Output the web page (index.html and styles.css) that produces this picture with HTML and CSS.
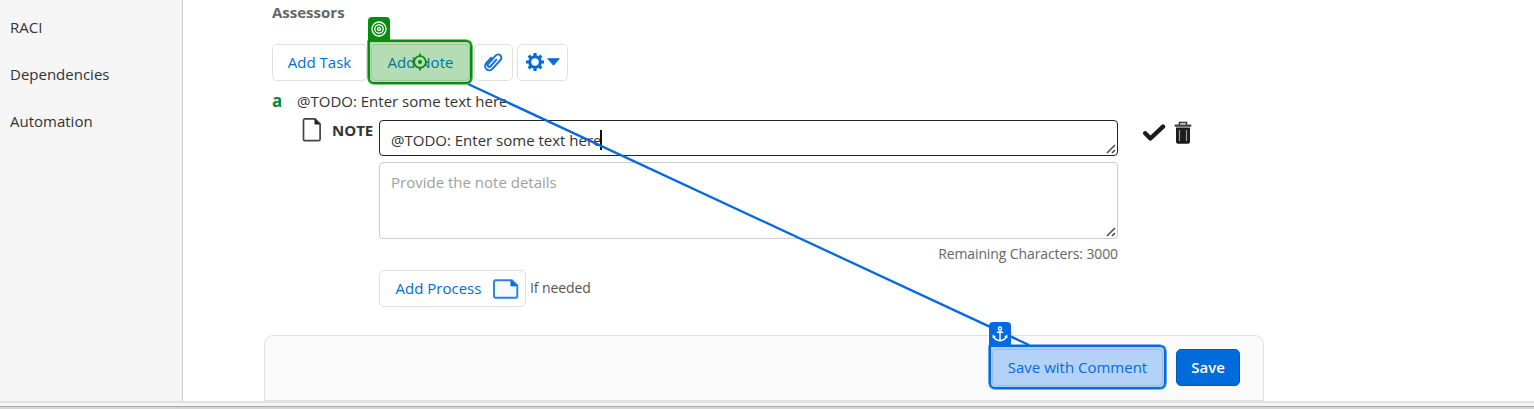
FILE: index.html
```html
<!DOCTYPE html>
<html lang="en">
<head>
<meta charset="utf-8">
<title>Process editor</title>
<link rel="stylesheet" href="styles.css">
</head>
<body>
<div class="app">
  <nav class="sidebar">
    <a class="nav-item raci">RACI</a>
    <a class="nav-item deps">Dependencies</a>
    <a class="nav-item auto">Automation</a>
  </nav>
  <main class="main">
    <h2 class="heading">Assessors</h2>
    <div class="toolbar">
      <button class="btn add-task">Add Task</button>
      <button class="btn add-note">Add Note</button>
      <button class="btn clip" aria-label="Attach">
        <svg width="20" height="20" viewBox="-10 -10 20 20" fill="none" stroke="#1473dc" stroke-width="2" stroke-linecap="round"><path transform="rotate(42)" d="M-4.200-2V5.500a4.200 4.200 0 0 0 8.400 0V-6.500a3.300 3.300 0 0 0-6.600 0V4.800a1.700 1.700 0 0 0 3.400 0V-4"/></svg>
      </button>
      <button class="btn gear" aria-label="Settings">
        <svg width="20" height="20" viewBox="-10 -10 20 20"><circle r="5.300" fill="none" stroke="#006cdb" stroke-width="3.100"/><g stroke="#006cdb" stroke-width="3.200"><path d="M0-9V-6M0 9V6M-9 0H-6M9 0H6M-6.300-6.300-4.400-4.400M6.300-6.300 4.400-4.400M-6.300 6.300-4.400 4.400M6.300 6.300 4.400 4.400"/></g></svg>
        <svg width="13" height="8" viewBox="0 0 13 8"><path d="M.8.800h11.400L6.500 7.200z" fill="#006cdb" stroke="#006cdb" stroke-linejoin="round"/></svg>
      </button>
    </div>
    <div class="step"><b class="step-key">a</b><span class="step-text">@TODO: Enter some text here</span></div>
    <div class="note">
      <div class="note-label">
        <svg width="20" height="24" viewBox="0 0 20 24"><path d="M3 .9h10l5.100 5.100v15.200a1.500 1.500 0 0 1-1.500 1.500H3a1.500 1.500 0 0 1-1.500-1.500V2.400A1.500 1.500 0 0 1 3 .9z" fill="#fff" stroke="#444" stroke-width="1.700"/><path d="M12.500.5v6h6z" fill="#222"/></svg>
        <b class="note-word">NOTE</b>
      </div>
      <div class="fields">
        <div class="field title-field"><span class="value">@TODO: Enter some text here</span><i class="caret"></i><svg class="grip" width="10" height="10" viewBox="0 0 10 10"><path d="M1 9 9 1M6 9l3-3" stroke="#444" stroke-width="1.500"/></svg></div>
        <div class="field detail-field"><span class="placeholder">Provide the note details</span><svg class="grip" width="10" height="10" viewBox="0 0 10 10"><path d="M1 9 9 1M6 9l3-3" stroke="#444" stroke-width="1.500"/></svg></div>
        <div class="remaining"><span>Remaining Characters: 3000</span></div>
        <div class="process-row">
          <button class="btn add-process"><span class="process-word">Add Process</span>
            <svg width="26" height="20" viewBox="0 0 26 20"><path d="M2.500 1.200h16.300l5.500 5.300v10.800a1.500 1.500 0 0 1-1.500 1.500H2.500A1.500 1.500 0 0 1 1 17.300V2.700a1.500 1.500 0 0 1 1.500-1.500z" fill="#f5f9fe" stroke="#2b80df" stroke-width="1.900"/><path d="M17.500 1v6.300h7z" fill="#006cdb"/></svg>
          </button>
          <span class="hint">If needed</span>
        </div>
      </div>
      <div class="actions">
        <svg width="24" height="20" viewBox="0 0 24 20"><path d="m3.200 10.300 5.200 5.200L21 3.700" fill="none" stroke="#1b1b1d" stroke-width="4.400" stroke-linecap="round" stroke-linejoin="round"/></svg>
        <svg width="18" height="24" viewBox="0 0 18 24"><path d="M5.500 4V1.500h7V4" fill="none" stroke="#333" stroke-width="1.500"/><path d="M.7 3.500h16.600v2.300H.7z" fill="#444"/><path d="M2 6.600h14v14.200a2 2 0 0 1-2 2H4a2 2 0 0 1-2-2z" fill="#1c1c1c"/><path d="M5.500 9v11M12.500 9v11" stroke="#999" stroke-width="1.200"/></svg>
      </div>
    </div>
    <footer class="save-bar">
      <button class="btn save-comment">Save with Comment</button>
      <button class="btn save">Save</button>
    </footer>
  </main>
</div>
<div class="bottom-strip"></div>
<svg class="connector" width="1534" height="409"><path d="M468 84 1029 345" stroke="#0569e3" stroke-width="2.300"/></svg>
<div class="highlight target">
  <span class="tag"><svg width="16" height="16" viewBox="-8 -8 16 16" fill="none" stroke="#fff" stroke-width="1.300"><circle r="7"/><circle r="4.200"/><circle r="1.500"/></svg></span>
  <svg class="crosshair" width="18" height="18" viewBox="-9 -9 18 18" fill="none" stroke="#078a0d" stroke-width="1.700"><circle r="5.900" fill="#b4dcb5"/><path d="M0-8.500V-5M0 8.500V5M-8.500 0H-5M8.500 0H5"/><circle r="2" fill="#078a0d" stroke="none"/></svg>
</div>
<div class="highlight anchor">
  <span class="tag"><svg width="16" height="16" viewBox="0 0 16 16" fill="none" stroke="#fff" stroke-width="1.400"><circle cx="8" cy="2.500" r="1.600"/><path d="M8 4v10.700M4.800 6.200h6.400M1.800 10.500C2.500 13 5 14.500 8 14.700c3-.2 5.500-1.700 6.200-4.200M1.300 12V9.800l2 1M14.700 12V9.800l-2 1"/></svg></span>
</div>
</body>
</html>
```

FILE: styles.css
```css
* { box-sizing: border-box; }
body {
  margin: 0;
  width: 1534px;
  height: 409px;
  overflow: hidden;
  position: relative;
  background: #fff;
  color: #333;
  font: 15px/20px "Open Sans", sans-serif;
}
.app { display: flex; height: 401px; }
.sidebar {
  width: 183px;
  padding: 17px 0 0 10px;
  display: flex;
  flex-direction: column;
  gap: 27px;
  background: #f5f5f5;
  border-right: 1px solid #ccc;
}
.main { flex: 1; padding-left: 81px; display: flex; flex-direction: column; }
.heading { margin: 0; height: 44px; padding: 2px 0 0 8px; font-size: 15px; line-height: 20px; color: #666; }
.toolbar { display: flex; height: 37px; padding-left: 8px; gap: 4px; }
.btn {
  display: flex;
  align-items: center;
  justify-content: center;
  height: 37px;
  padding: 0 0 2px;
  border: 1px solid #e0e0e0;
  border-radius: 5px;
  background: #fff;
  color: #006cdb;
  font: inherit;
  white-space: nowrap;
}
.add-task { width: 95px; }
.add-note { width: 99px; }
.clip { width: 39px; padding-right: 2px; }
.gear { width: 51px; gap: 2px; }
.step { display: flex; height: 39px; padding: 10px 0 0 8px; }
.step-key { width: 25px; color: #0a873a; font-size: 17px; }
.note { display: flex; height: 215px; }
.note-label { width: 115px; padding-left: 38px; display: flex; gap: 10px; align-items: flex-start; }
.note-label svg { margin-top: -2px; }
.fields { width: 739px; }
.field { display: flex; position: relative; border: 1px solid #ccc; border-radius: 4px; padding-left: 11px; }
.title-field { height: 36px; padding-top: 9px; border-color: #222; }
.caret { width: 2px; height: 20px; margin: 0 0 0 -2px; background: #111; }
.detail-field { height: 77px; margin-top: 6px; padding-top: 9px; }
.placeholder { color: #a0a0a0; }
.grip { position: absolute; right: 1px; bottom: 1px; }
.remaining { height: 31px; padding-top: 5px; text-align: right; font-size: 14px; letter-spacing: -.11px; color: #666; }
.process-row { display: flex; gap: 4px; line-height: 35px; font-size: 14px; letter-spacing: -.1px; color: #555; }
.add-process { width: 147px; gap: 12px; padding: 0 0 0 10px; font-size: 15px; letter-spacing: 0; }
.actions { padding: 3px 0 0 24px; display: flex; gap: 8px; align-items: flex-start; }
.actions svg:last-child { margin-top: -2px; }
.save-bar {
  width: 1000px;
  height: 66px;
  padding: 13px 24px 0 0;
  display: flex;
  justify-content: flex-end;
  gap: 13px;
  background: #fafafa;
  border: 1px solid #e0e0e0;
  border-radius: 9px 9px 0 0;
}
.save-comment { width: 171px; }
.save { width: 64px; margin-right: -1px; background: #006cdb; border-color: #0059b5; color: #fff; font-weight: 600; }
.bottom-strip { height: 8px; background: #d5d5d5; border-top: 2px solid #e1e1e1; box-shadow: inset 0 3px #f5f5f5, inset 0 4px #aaa; }
.connector { position: absolute; left: 0; top: 0; }
.highlight { position: absolute; border: 2px solid; border-radius: 1px 6px 6px 6px; }
.target { left: 368px; top: 40px; width: 104px; height: 44px; border-color: #078d0e; background: rgba(7, 141, 14, .3); box-shadow: 0 0 0 .6px #078d0e; }
.anchor { left: 989px; top: 345px; width: 177px; height: 44px; border-color: #0569e3; background: rgba(5, 105, 227, .3); box-shadow: 0 0 0 .6px #0569e3; }
.tag { position: absolute; left: -2px; bottom: 100%; width: 22px; height: 25px; padding: 4px 3px; border-radius: 4px 4px 0 0; background: #078d0e; }
.anchor .tag { background: #0569e3; }
.tag svg { display: block; }
.crosshair { position: absolute; left: 41px; top: 11px; }
```
